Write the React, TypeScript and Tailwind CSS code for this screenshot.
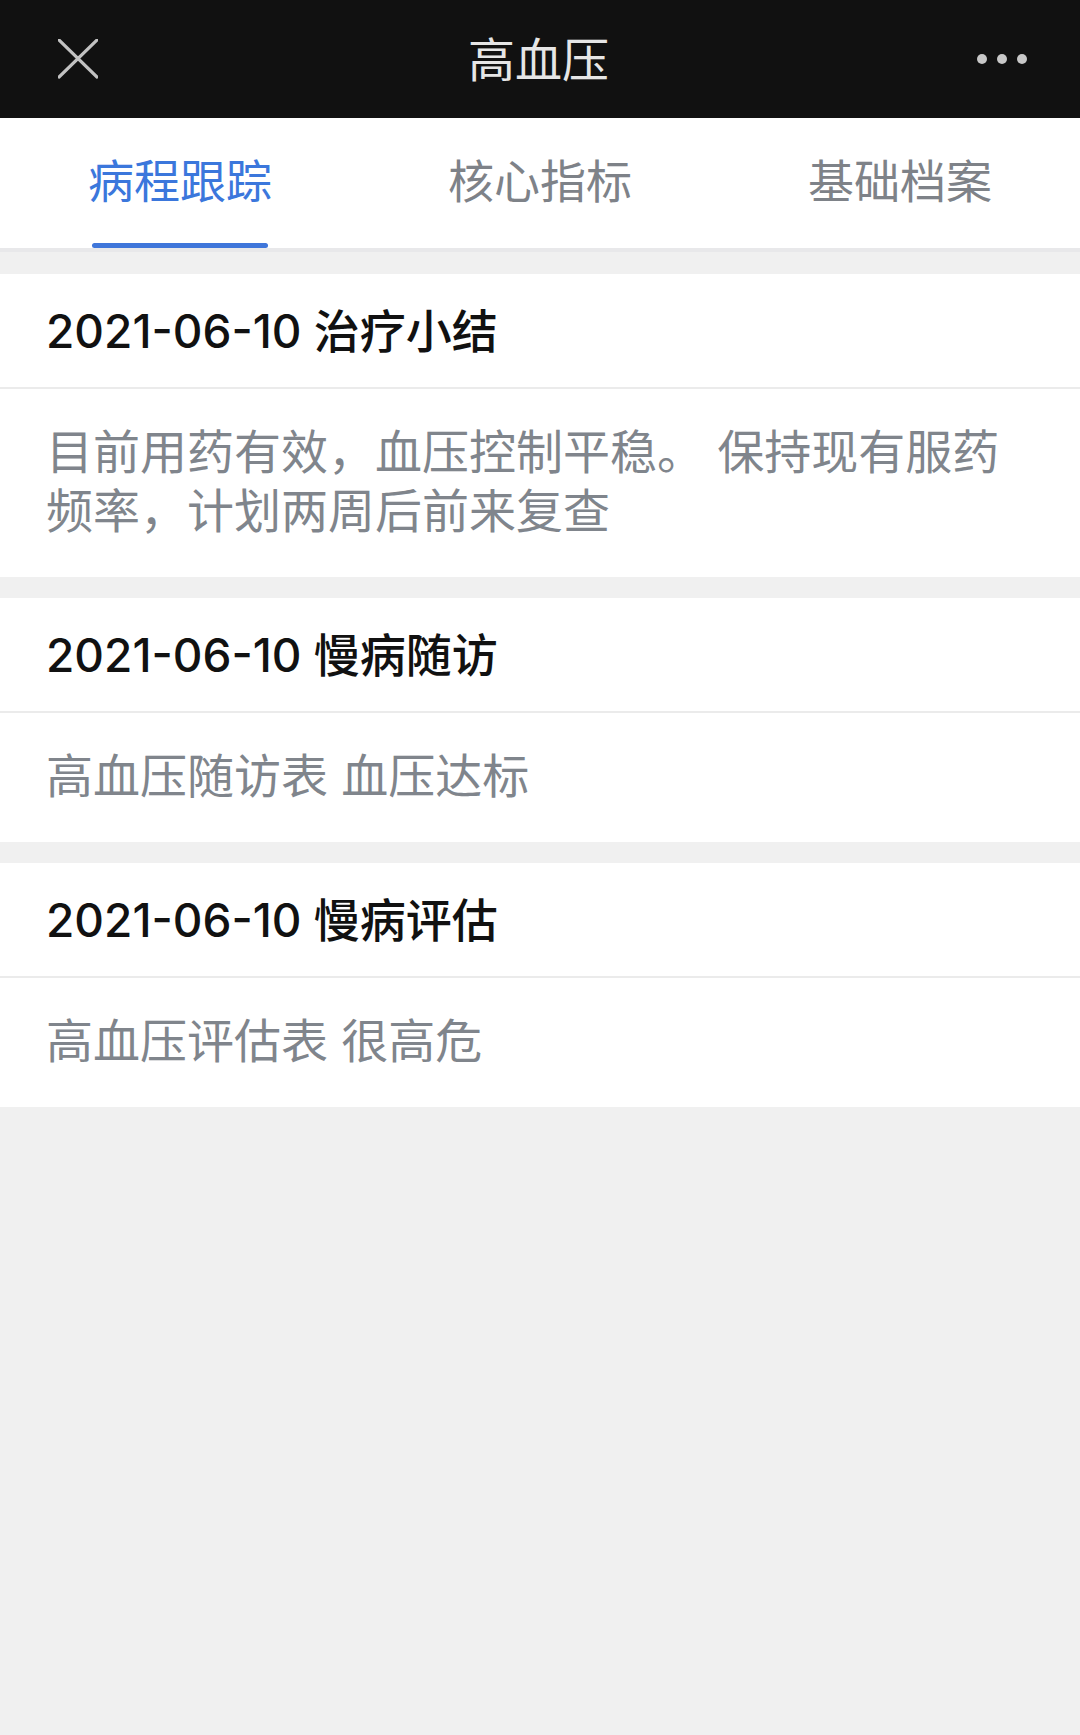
import React from "react";

const FONT = { fontFamily: 'Inter, "Noto Sans CJK SC", sans-serif' };

type Entry = { title: string; body: string };

const entries: Entry[] = [
  { title: "2021-06-10 治疗小结", body: "目前用药有效，血压控制平稳。 保持现有服药频率，计划两周后前来复查" },
  { title: "2021-06-10 慢病随访", body: "高血压随访表 血压达标" },
  { title: "2021-06-10 慢病评估", body: "高血压评估表 很高危" },
];

const tabs = ["病程跟踪", "核心指标", "基础档案"];

export default function App() {
  return (
    <div className="w-[1080px] min-h-[1735px] bg-[#f0f0f0]" style={FONT}>
      {/* Header */}
      <div className="h-[118px] bg-[#111111] flex items-center justify-between pl-[58px] pr-[53px]">
        <svg width="40" height="40" viewBox="0 0 40 40" className="shrink-0">
          <path d="M1 1 L39 38 M39 1 L1 38" stroke="#c2c2c2" strokeWidth="3.2" strokeLinecap="round" />
        </svg>
        <div className="text-[47px] leading-none text-[#e6e6e6] translate-x-[1px]">高血压</div>
        <div className="flex items-center gap-[10px]">
          <span className="w-[10px] h-[10px] rounded-full bg-[#c8c8c8]" />
          <span className="w-[10px] h-[10px] rounded-full bg-[#c8c8c8]" />
          <span className="w-[10px] h-[10px] rounded-full bg-[#c8c8c8]" />
        </div>
      </div>

      {/* Tabs */}
      <div className="bg-white flex h-[134px] border-b-[4px] border-[#e8e8ea]">
        {tabs.map((t, i) => (
          <div key={t} className="flex-1 flex flex-col items-center">
            <div
              className={
                "flex-1 flex items-center text-[46px] leading-none pt-[1px] " +
                (i === 0 ? "text-[#3b77dc]" : "text-[#7e8288]")
              }
            >
              {t}
            </div>
            <div className={"h-[5px] w-[176px] rounded-full " + (i === 0 ? "bg-[#3f76da]" : "bg-transparent")} />
          </div>
        ))}
      </div>

      {/* Cards */}
      <div className="flex flex-col gap-[21px] pt-[22px]">
        {entries.map((e) => (
          <div key={e.title + e.body} className="bg-white">
            <div className="h-[115px] flex items-center pl-[46px] border-b-2 border-[#ebebeb]">
              <span className="text-[46px] leading-none font-medium text-[#111111]">{e.title}</span>
            </div>
            <div className="pl-[46px] pr-[40px] pt-[33px] pb-[37px] text-[47px] leading-[59px] text-[#80858c]">
              {e.body}
            </div>
          </div>
        ))}
      </div>
    </div>
  );
}
